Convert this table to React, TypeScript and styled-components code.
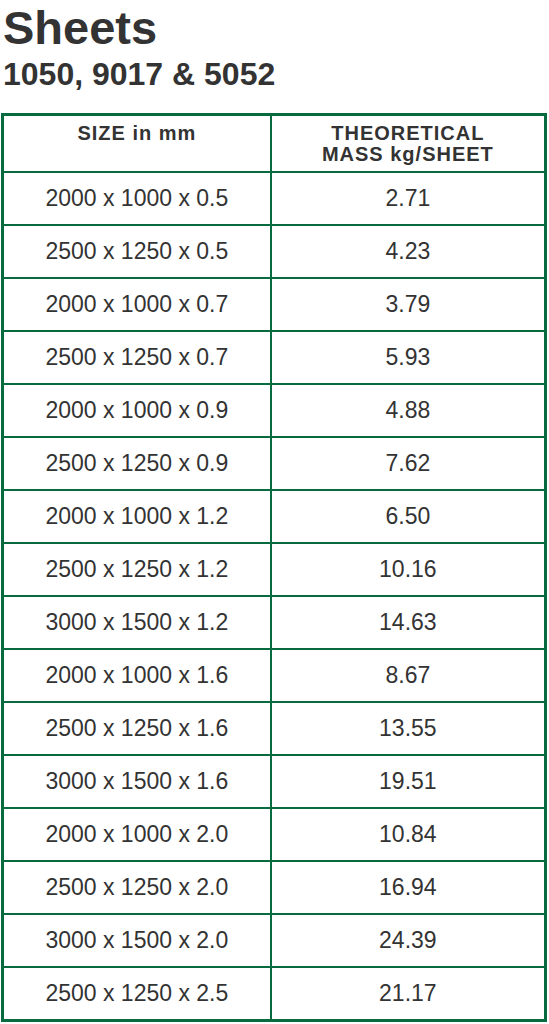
import React from "react"
import styled, { createGlobalStyle } from "styled-components"

const Global = createGlobalStyle`
  body {
    margin: 0;
    background: #fff;
    font-family: "Liberation Sans", Arial, sans-serif;
    color: #333;
  }
`

const Page = styled.div`
  width: 549px;
  padding: 0 1px;
  box-sizing: border-box;
`

const Title = styled.h1`
  margin: 0;
  padding: 0 2px;
  font-size: 47px;
  line-height: normal;
  font-weight: 700;
  color: #333;
`

const Subtitle = styled.h2`
  margin: 1px 0 0;
  padding: 0 2px;
  font-size: 32px;
  line-height: 36px;
  font-weight: 700;
  color: #333;
`

const Table = styled.table`
  margin-top: 21px;
  width: 546px;
  border-collapse: collapse;
  border: 3px solid #076b3f;
`

const HeadCell = styled.th<{ $w: string }>`
  border: 2px solid #076b3f;
  width: ${(p) => p.$w};
  height: 48px;
  padding: 7px 0 0;
  vertical-align: top;
  font-size: 20px;
  line-height: 21px;
  letter-spacing: 1px;
  font-weight: 700;
  color: #333;
  text-align: center;
`

const Cell = styled.td`
  border: 2px solid #076b3f;
  height: 51px;
  padding: 0;
  font-size: 23px;
  color: #333;
  text-align: center;
`

const rows: [string, string][] = [
  ["2000 x 1000 x 0.5", "2.71"],
  ["2500 x 1250 x 0.5", "4.23"],
  ["2000 x 1000 x 0.7", "3.79"],
  ["2500 x 1250 x 0.7", "5.93"],
  ["2000 x 1000 x 0.9", "4.88"],
  ["2500 x 1250 x 0.9", "7.62"],
  ["2000 x 1000 x 1.2", "6.50"],
  ["2500 x 1250 x 1.2", "10.16"],
  ["3000 x 1500 x 1.2", "14.63"],
  ["2000 x 1000 x 1.6", "8.67"],
  ["2500 x 1250 x 1.6", "13.55"],
  ["3000 x 1500 x 1.6", "19.51"],
  ["2000 x 1000 x 2.0", "10.84"],
  ["2500 x 1250 x 2.0", "16.94"],
  ["3000 x 1500 x 2.0", "24.39"],
  ["2500 x 1250 x 2.5", "21.17"],
]

export default function App() {
  return (
    <Page>
      <Global />
      <Title>Sheets</Title>
      <Subtitle>1050, 9017 &amp; 5052</Subtitle>
      <Table>
        <thead>
          <tr>
            <HeadCell $w="49.4%">SIZE in mm</HeadCell>
            <HeadCell $w="50.6%">
              THEORETICAL
              <br />
              MASS kg/SHEET
            </HeadCell>
          </tr>
        </thead>
        <tbody>
          {rows.map(([size, mass]) => (
            <tr key={size}>
              <Cell>{size}</Cell>
              <Cell>{mass}</Cell>
            </tr>
          ))}
        </tbody>
      </Table>
    </Page>
  )
}
